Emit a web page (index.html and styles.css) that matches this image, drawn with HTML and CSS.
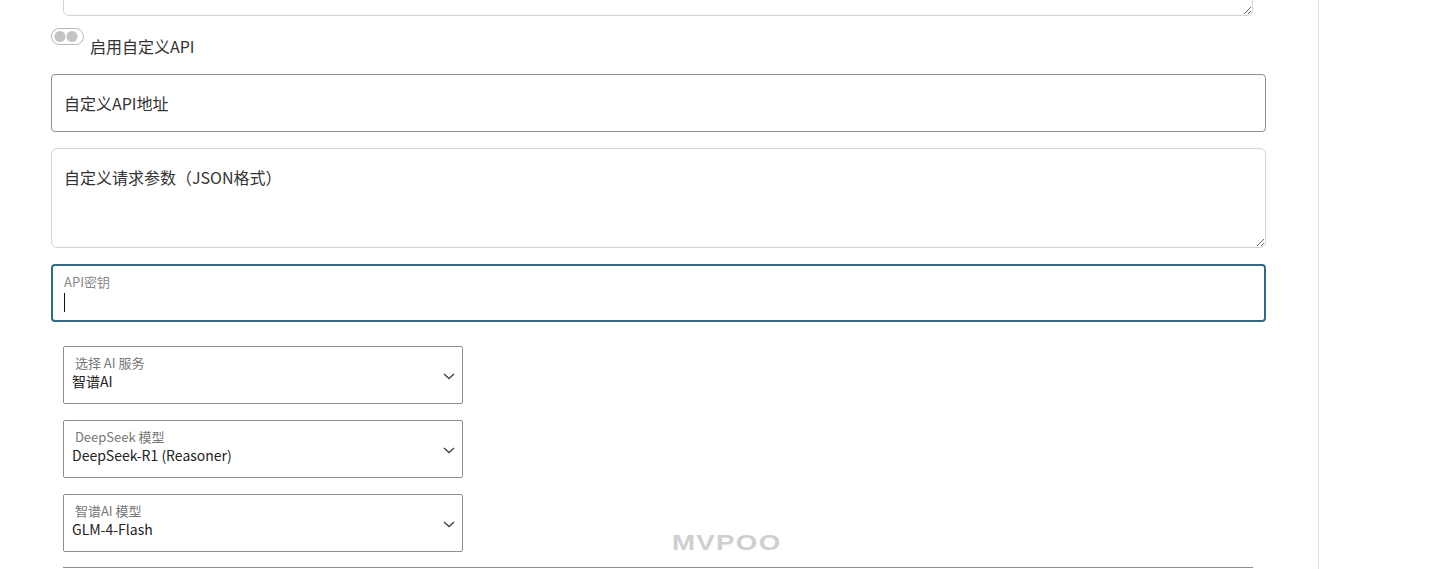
FILE: index.html
```html
<!DOCTYPE html>
<html lang="zh-CN">
<head>
    <meta charset="UTF-8">
    <meta name="viewport" content="width=device-width, initial-scale=1.0">
    <title>AI 设置</title>
    <link rel="stylesheet" href="styles.css">
</head>
<body>

<div class="layout">
  <main class="panel">
    <div class="stack">
      <textarea class="field top-area"></textarea>

      <div class="switch-row">
        <span class="switch">
          <svg width="33" height="17" viewBox="0 0 33 17">
            <rect x="0.5" y="0.5" width="32" height="16" rx="8" fill="#fff" stroke="#b4b4b4"/>
            <circle cx="9" cy="8.5" r="5.5" fill="#c4c4c4"/>
            <circle cx="21" cy="8.5" r="5.5" fill="#c4c4c4"/>
          </svg>
        </span>
        <label class="switch-label">启用自定义API</label>
      </div>

      <input class="field plain" type="text" placeholder="自定义API地址">

      <textarea class="field area" placeholder="自定义请求参数（JSON格式）"></textarea>

      <div class="floating focused">
        <label>API密钥</label>
        <span class="caret"></span>
      </div>

      <div class="selects">
        <div class="floating select">
          <label>&nbsp;选择 AI 服务</label>
          <span class="value">智谱AI</span>
          <svg class="chevron" width="12" height="7" viewBox="0 0 12 7"><path d="M1 1l5 4.5L11 1" fill="none" stroke="#444" stroke-width="1.4"/></svg>
        </div>
        <div class="floating select">
          <label>&nbsp;DeepSeek 模型</label>
          <span class="value">DeepSeek-R1 (Reasoner)</span>
          <svg class="chevron" width="12" height="7" viewBox="0 0 12 7"><path d="M1 1l5 4.5L11 1" fill="none" stroke="#444" stroke-width="1.4"/></svg>
        </div>
        <div class="floating select">
          <label>&nbsp;智谱AI 模型</label>
          <span class="value">GLM-4-Flash</span>
          <svg class="chevron" width="12" height="7" viewBox="0 0 12 7"><path d="M1 1l5 4.5L11 1" fill="none" stroke="#444" stroke-width="1.4"/></svg>
        </div>
      </div>

      <hr class="divider">
    </div>
  </main>
  <aside class="side"></aside>
</div>

<div class="watermark">MVPOO</div>

</body>
</html>
```

FILE: styles.css
```css
:root {
    --text: #222;
    --muted: #777;
    --focus: #2f6a8b;
}
html, body {
    margin: 0;
    height: 100%;
    overflow: hidden;
    background: #fff;
}
body {
    font-family: "Noto Sans CJK SC", "Noto Sans", sans-serif;
    color: var(--text);
    font-size: 16px;
}
.layout {
    display: flex;
    height: 100%;
}
.panel {
    width: 1319px;
    border-right: 1px solid #ddd;
    padding: 0 52px 0 51px;
    box-sizing: border-box;
}
.side {
    flex: 1;
}
.stack {
    display: flex;
    flex-direction: column;
    margin-top: -84px;
}
.field {
    display: block;
    box-sizing: border-box;
    width: 100%;
    font-family: inherit;
    font-size: 16px;
    color: var(--text);
    background: #fff;
    outline: none;
}
.field::placeholder {
    color: #333;
}
.top-area {
    width: auto;
    height: 100px;
    margin: 0 13px 0 12px;
    border: 1px solid #d4d4d4;
    border-radius: 6px;
    resize: vertical;
}
.switch-row {
    display: flex;
    align-items: flex-start;
    gap: 6px;
    margin-top: 12px;
    height: 32px;
}
.switch {
    display: block;
    height: 17px;
}
.switch svg {
    display: block;
}
.switch-label {
    margin-top: 6px;
    line-height: 24px;
    color: #333;
}
.plain {
    height: 58px;
    margin-top: 14px;
    padding: 0 12px;
    border: 1px solid #8e8e8e;
    border-radius: 4px;
}
.area {
    height: 100px;
    margin-top: 16px;
    padding: 16px 12px;
    line-height: 24px;
    border: 1px solid #d4d4d4;
    border-radius: 6px;
    resize: vertical;
}
.floating {
    position: relative;
    box-sizing: border-box;
    height: 58px;
    background: #fff;
}
.focused {
    margin-top: 16px;
    border: 2px solid var(--focus);
    border-radius: 4px;
    padding: 7px 12px 0 11px;
}
.focused label {
    display: block;
    font-size: 13px;
    line-height: 18px;
    color: #888;
}
.caret {
    position: absolute;
    left: 11px;
    top: 27px;
    width: 1px;
    height: 19px;
    background: #111;
}
.selects {
    display: flex;
    flex-direction: column;
    gap: 16px;
    margin: 24px 0 0 12px;
}
.select {
    width: 400px;
    border: 1px solid #8e8e8e;
    border-radius: 2px;
    padding: 7px 8px 0 8px;
}
.select label {
    display: block;
    font-size: 13px;
    line-height: 18px;
    color: #777;
}
.select .value {
    display: block;
    font-size: 14px;
    line-height: 18px;
    color: #222;
}
.chevron {
    position: absolute;
    right: 7px;
    top: 26px;
}
.divider {
    margin: 15px 13px 0 12px;
    border: 0;
    border-top: 1px solid #8e8e8e;
}
.watermark {
    position: absolute;
    left: 672px;
    top: 530px;
    font-family: "Liberation Sans", "DejaVu Sans", sans-serif;
    font-weight: 700;
    font-size: 22px;
    letter-spacing: 1px;
    color: #cfcfcf;
    transform: scaleX(1.26);
    transform-origin: left center;
}
```
